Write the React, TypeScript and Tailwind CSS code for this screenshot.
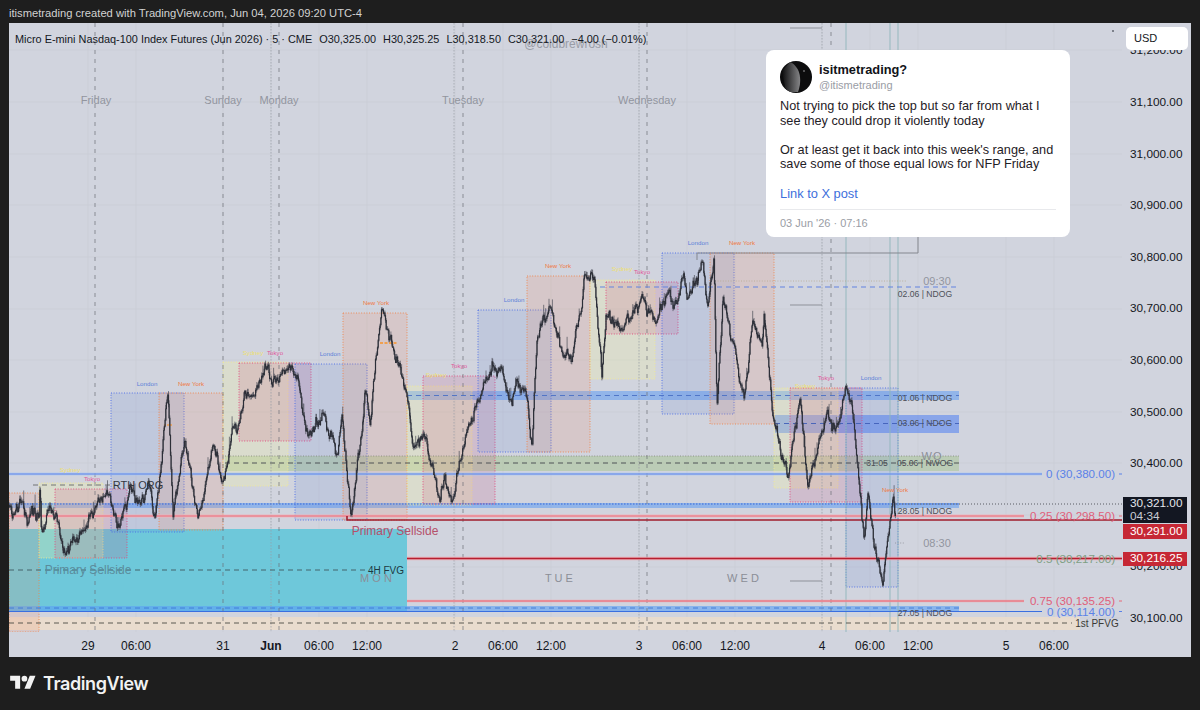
const waypoints: [number, number][] = [
  [9, 505], [14, 518], [20, 500], [28, 522], [34, 505], [39, 515], [40, 483], [41, 527], [50, 507], [58, 522], [65, 557],
  [75, 540], [85, 530], [95, 505], [105, 495], [110, 492], [117, 530], [130, 485], [140, 505], [150, 490], [155, 517],
  [168, 393], [173, 520], [185, 440], [198, 517], [213, 443], [223, 483], [233, 427], [238, 425], [245, 387], [250, 397],
  [267, 370], [272, 390], [287, 367], [297, 373], [308, 437], [323, 412], [337, 453], [342, 415], [351, 518], [363, 418],
  [365, 387], [370, 427], [382, 313], [393, 347], [407, 397], [413, 443], [423, 433], [440, 503], [445, 473], [451, 505],
  [467, 430], [480, 397], [488, 377], [502, 368], [510, 400], [517, 377], [527, 397], [532, 450], [537, 340], [550, 307],
  [563, 353], [572, 360], [582, 307], [584, 277], [595, 282], [602, 377], [606, 313], [620, 330], [642, 295], [657, 320],
  [667, 293], [678, 303], [682, 275], [687, 300], [703, 260], [708, 307], [714, 255], [717, 407], [723, 293], [737, 363],
  [744, 400], [753, 320], [762, 350], [764, 313], [773, 417], [788, 480], [800, 397], [808, 487], [827, 410], [835, 432],
  [847, 388], [855, 437], [860, 497], [864, 540], [868, 493], [877, 563], [883, 585], [888, 537], [893, 500], [895, 517],
];

// seeded so the candles come out the same every run
function buildCandles() {
  let seed = 74;
  const rnd = () => {
    seed = (seed * 16807) % 2147483647;
    return seed / 2147483647;
  };
  let wicks = "";
  let bodies = "";
  let walk = 0;
  let seg = 0;
  let prev = waypoints[0][1];
  for (let x = 9; x < 896; x += 0.67) {
    while (seg < waypoints.length - 2 && x > waypoints[seg + 1][0]) seg++;
    const [x0, y0] = waypoints[seg];
    const [x1, y1] = waypoints[seg + 1];
    const t = Math.min(1, (x - x0) / (x1 - x0));
    walk = walk * 0.9 + (rnd() - 0.5) * 5;
    const swing = Math.sin(x * 0.75) * 3 + Math.sin(x * 2.1 + 1) * 2.5;
    const damp = Math.min(1, 4 * t * (1 - t) + 0.3);
    const y = y0 + (y1 - y0) * t + (walk + swing + (rnd() - 0.5) * 4) * damp;
    const top = Math.min(prev, y);
    const bottom = Math.max(prev, y);
    const spike = rnd() < 0.06 ? 4 + rnd() * 6 : 0;
    wicks += `M${x.toFixed(1)} ${(top - 0.5 - rnd() * 3 - spike).toFixed(1)}V${(bottom + 0.5 + rnd() * 3).toFixed(1)}`;
    bodies += `M${x.toFixed(1)} ${top.toFixed(1)}V${(bottom + 0.6).toFixed(1)}`;
    prev = y;
  }
  return { wicks, bodies };
}

const candles = buildCandles();

type Session = { x: number; y: number; w: number; h: number; kind: "london" | "ny" | "sydney" | "tokyo" };

const sessionStyle = {
  london: { fill: "#5b7fd8", op: 0.14, stroke: "#4a6be8" },
  ny: { fill: "#f0916a", op: 0.18, stroke: "#f0854a" },
  sydney: { fill: "#f0f0a0", op: 0.28, stroke: "#f2ea90" },
  tokyo: { fill: "#c8507a", op: 0.17, stroke: "#e2487c" },
};

const sessions: Session[] = [
  { x: 9, y: 493, w: 30, h: 139, kind: "ny" },
  { x: 39, y: 483, w: 64, h: 75, kind: "sydney" },
  { x: 55, y: 489, w: 72, h: 69, kind: "tokyo" },
  { x: 111, y: 393, w: 73, h: 139, kind: "london" },
  { x: 159, y: 393, w: 64, h: 137, kind: "ny" },
  { x: 223, y: 362, w: 65, h: 124, kind: "sydney" },
  { x: 239, y: 363, w: 72, h: 78, kind: "tokyo" },
  { x: 295, y: 364, w: 72, h: 156, kind: "london" },
  { x: 343, y: 313, w: 64, h: 207, kind: "ny" },
  { x: 407, y: 386, w: 65, h: 119, kind: "sydney" },
  { x: 423, y: 376, w: 72, h: 128, kind: "tokyo" },
  { x: 478, y: 310, w: 73, h: 142, kind: "london" },
  { x: 527, y: 276, w: 63, h: 176, kind: "ny" },
  { x: 590, y: 280, w: 65, h: 99, kind: "sydney" },
  { x: 606, y: 282, w: 72, h: 52, kind: "tokyo" },
  { x: 662, y: 253, w: 72, h: 161, kind: "london" },
  { x: 710, y: 253, w: 64, h: 171, kind: "ny" },
  { x: 774, y: 388, w: 64, h: 100, kind: "sydney" },
  { x: 790, y: 388, w: 72, h: 114, kind: "tokyo" },
  { x: 846, y: 388, w: 52, h: 199, kind: "london" },
];

const sessionLabels: [string, number, number, string][] = [
  ["Sydney", 70, 472, "#efe070"], ["Tokyo", 92, 481, "#e0559a"], ["London", 147, 386, "#5b7fd8"], ["New York", 191, 386, "#f07840"],
  ["Sydney", 253, 355, "#efe070"], ["Tokyo", 275, 355, "#e0559a"], ["London", 330, 356, "#5b7fd8"], ["New York", 376, 305, "#f07840"],
  ["Sydney", 436, 377, "#efe070"], ["Tokyo", 459, 368, "#e0559a"], ["London", 514, 302, "#5b7fd8"], ["New York", 558, 268, "#f07840"],
  ["Sydney", 622, 271, "#efe070"], ["Tokyo", 642, 274, "#e0559a"], ["London", 698, 245, "#5b7fd8"], ["New York", 742, 245, "#f07840"],
  ["Sydney", 805, 388, "#efe070"], ["Tokyo", 826, 380, "#e0559a"], ["London", 871, 380, "#5b7fd8"], ["New York", 895, 492, "#f07840"],
];

const ndogLabels: [string, number, number][] = [
  ["02.06 | NDOG", 925, 297], ["01.06 | NDOG", 925, 401], ["03.06 | NDOG", 925, 426], ["05.06 | NWOG", 925, 466],
  ["28.05 | NDOG", 925, 514], ["27.05 | NDOG", 925, 616],
];

const fibLabels: [string, number, string][] = [
  ["0 (30,380.00)", 478, "#5b82e8"], ["0.25 (30,298.50)", 520, "#e0607a"], ["0.5 (30,217.00)", 563, "#7f9f84"],
  ["0.75 (30,135.25)", 605, "#e0607a"], ["0 (30,114.00)", 616, "#5b82e8"],
];

const gridX = [88, 136, 223, 271, 319, 367, 455, 503, 551, 639, 687, 735, 822, 870, 918, 1006, 1054];
// 30,300.00 sits behind the price badges, so its row stays empty
const prices = ["31,200.00", "31,100.00", "31,000.00", "30,900.00", "30,800.00", "30,700.00", "30,600.00", "30,500.00", "30,400.00", "", "30,200.00", "30,100.00"];
const gridY = [50, 102, 154, 205, 257, 309, 360, 412, 463, 515, 567, 618];
const dayLines = [95, 223, 279, 463, 647, 831];
const dotLines = [271, 454, 639, 822];
const dayNames: [string, number][] = [["Friday", 96], ["Sunday", 223], ["Monday", 279], ["Tuesday", 463], ["Wednesday", 647]];
const weekdays: [string, number][] = [["M O N", 376], ["T U E", 559], ["W E D", 743]];

function ChartDrawing() {
  return (
    <svg viewBox="9 23 1113 609" className="block h-full w-full">
      {gridY.map((y) => <line key={y} x1={9} x2={1122} y1={y} y2={y} stroke="#c8cbd5" strokeWidth={0.7} />)}
      {gridX.map((x) => <line key={x} x1={x} x2={x} y1={23} y2={632} stroke="#c8cbd5" strokeWidth={0.7} />)}

      {/* lines the cyan block covers */}
      <line x1={9} x2={407} y1={558.5} y2={558.5} stroke="#7a2030" strokeWidth={1.5} />
      <line x1={9} x2={407} y1={601} y2={601} stroke="#7a2030" strokeWidth={1} />

      <rect x={9} y={529} width={398} height={83} fill="#6ec8da" />
      <rect x={9} y={617} width={1071} height={13} fill="#f3dfc8" opacity={0.7} />

      <rect x={407} y={391} width={552} height={9} fill="#5f9bf2" opacity={0.55} />
      <rect x={775} y={415} width={184} height={18} fill="#4f7ef2" opacity={0.55} />
      <rect x={225} y={456} width={734} height={15} fill="#a5c48e" opacity={0.5} />
      <rect x={9} y={503} width={950} height={5} fill="#5f9bf2" opacity={0.55} />
      <rect x={9} y={606} width={950} height={6} fill="#5aa0f5" opacity={0.6} />

      {sessions.map((s) => {
        const st = sessionStyle[s.kind];
        return (
          <g key={`${s.kind}-${s.x}`}>
            <rect x={s.x} y={s.y} width={s.w} height={s.h} fill={st.fill} opacity={st.op} />
            <rect x={s.x} y={s.y} width={s.w} height={s.h} fill="none" stroke={st.stroke} strokeWidth={0.9} strokeDasharray="1 1.6" />
          </g>
        );
      })}

      {dotLines.map((x) => <line key={x} x1={x} x2={x} y1={23} y2={632} stroke="#9a9da6" strokeWidth={0.7} strokeDasharray="1.5 1.5" />)}
      {dayLines.map((x) => <line key={x} x1={x} x2={x} y1={23} y2={632} stroke="#6a6d75" strokeWidth={0.7} strokeDasharray="4 5" />)}
      {[846, 890, 898].map((x) => <line key={x} x1={x} x2={x} y1={23} y2={632} stroke="#8fb5ba" strokeWidth={0.9} />)}

      {/* levels */}
      <line x1={9} x2={1042} y1={474} y2={474} stroke="#a8c8f8" strokeWidth={3} opacity={0.6} />
      <line x1={9} x2={1042} y1={474} y2={474} stroke="#5b82e8" strokeWidth={1} />
      <line x1={9} x2={1024} y1={516} y2={516} stroke="#f5b5bd" strokeWidth={3} opacity={0.8} />
      <line x1={9} x2={1024} y1={516} y2={516} stroke="#e86a78" strokeWidth={1} />
      <path d="M347 516V520H1122" fill="none" stroke="#a01c2c" strokeWidth={1.6} />
      <line x1={407} x2={1122} y1={558.5} y2={558.5} stroke="#f2a6ae" strokeWidth={3.4} opacity={0.8} />
      <line x1={407} x2={1122} y1={558.5} y2={558.5} stroke="#b51f30" strokeWidth={1.3} />
      <line x1={407} x2={1024} y1={601} y2={601} stroke="#f2a6ae" strokeWidth={2.4} opacity={0.8} />
      <line x1={407} x2={1024} y1={601} y2={601} stroke="#e4606f" strokeWidth={0.9} />
      <line x1={9} x2={1042} y1={611.5} y2={611.5} stroke="#3a6fe0" strokeWidth={1} />
      {[[1119, 474, "#5b82e8"], [1119, 516, "#e86a78"], [1119, 601, "#e86a78"], [1119, 611.5, "#5b82e8"]].map(([x, y, c]) => (
        <line key={String(y)} x1={x as number} x2={1122} y1={y as number} y2={y as number} stroke={c as string} strokeWidth={1} />
      ))}

      {/* dashed / dotted levels */}
      <line x1={407} x2={959} y1={395.5} y2={395.5} stroke="#4a6fc4" strokeWidth={0.9} strokeDasharray="5 4" />
      <line x1={775} x2={959} y1={423.5} y2={423.5} stroke="#3f5fb8" strokeWidth={0.9} strokeDasharray="5 4" />
      <line x1={225} x2={959} y1={463} y2={463} stroke="#44474f" strokeWidth={0.9} strokeDasharray="5 4" />
      <line x1={225} x2={959} y1={456} y2={456} stroke="#777a70" strokeWidth={0.7} strokeDasharray="1 1.6" />
      <line x1={9} x2={959} y1={504} y2={504} stroke="#3568dc" strokeWidth={1.1} strokeDasharray="1.5 1.5" />
      <line x1={9} x2={959} y1={608} y2={608} stroke="#3f78d8" strokeWidth={0.9} strokeDasharray="5 4" />
      <line x1={9} x2={1072} y1={623} y2={623} stroke="#4b4a44" strokeWidth={0.9} strokeDasharray="5 4" />
      <line x1={9} x2={367} y1={570} y2={570} stroke="#3f5960" strokeWidth={0.9} strokeDasharray="5 4" />
      <line x1={33} x2={116} y1={485} y2={485} stroke="#666a66" strokeWidth={0.9} strokeDasharray="5 4" />
      <line x1={600} x2={958} y1={287} y2={287} stroke="#6383e0" strokeWidth={1} strokeDasharray="5 4" />
      <line x1={715} x2={907} y1={281} y2={281} stroke="#b8ab90" strokeWidth={0.8} strokeDasharray="1 1.6" />
      <line x1={896} x2={1122} y1={504} y2={504} stroke="#3b3e45" strokeWidth={0.8} strokeDasharray="1 2" />
      <line x1={895} x2={905} y1={543} y2={543} stroke="#8e9199" strokeWidth={0.8} strokeDasharray="1 1.6" />

      {/* range box and short markers */}
      <path d="M697 260V253H918V200" fill="none" stroke="#84878f" strokeWidth={1} />
      {[28, 305, 581].map((y) => <line key={y} x1={790} x2={822} y1={y} y2={y} stroke="#8e9199" strokeWidth={1} />)}
      <line x1={164} x2={172} y1={425} y2={425} stroke="#f0a050" strokeWidth={1.4} strokeDasharray="2 1" />
      <line x1={380} x2={397} y1={343} y2={343} stroke="#f0a050" strokeWidth={2} strokeDasharray="3 1.5" />

      <path d={candles.wicks} fill="none" stroke="#4a4d57" strokeWidth={0.7} />
      <path d={candles.bodies} fill="none" stroke="#2c2f38" strokeWidth={1.2} />

      {sessionLabels.map(([t, x, y, c]) => (
        <text key={`${t}-${x}`} x={x} y={y} fontSize={6.2} fill={c} textAnchor="middle">{t}</text>
      ))}
      {dayNames.map(([t, x]) => (
        <text key={t} x={x} y={104} fontSize={11} fill="#92959e" textAnchor="middle">{t}</text>
      ))}
      {weekdays.map(([t, x]) => (
        <text key={t} x={x} y={582} fontSize={11} fill="#8b8e97" textAnchor="middle">{t}</text>
      ))}
      <text x={566} y={48} fontSize={12} fill="#9a9da6" textAnchor="middle">@coldbrewrosh</text>
      <text x={138} y={489} fontSize={11} fill="#34373f" textAnchor="middle">RTH ORG</text>
      <text x={395} y={535} fontSize={12} fill="#b5506a" textAnchor="middle">Primary Sellside</text>
      <text x={88} y={574} fontSize={12} fill="#5a8c9c" textAnchor="middle">Primary Sellside</text>
      <text x={386} y={574} fontSize={10} fill="#1d3a42" textAnchor="middle">4H FVG</text>
      <text x={1097} y={627} fontSize={10} fill="#3a3a36" textAnchor="middle">1st PFVG</text>
      <text x={937} y={285} fontSize={11} fill="#92959e" textAnchor="middle">09:30</text>
      <text x={937} y={547} fontSize={11} fill="#92959e" textAnchor="middle">08:30</text>
      <text x={932} y={460} fontSize={11} fill="#8b8e97" textAnchor="middle" letterSpacing={1}>WO</text>
      <text x={877} y={466} fontSize={8.6} fill="#4d5058" textAnchor="middle">31.05</text>
      {ndogLabels.map(([t, x, y]) => (
        <text key={t} x={x} y={y} fontSize={8.6} fill="#4d5058" textAnchor="middle">{t}</text>
      ))}
      {fibLabels.map(([t, y, c]) => (
        <text key={t} x={1115} y={y} fontSize={11.6} fill={c} textAnchor="end">{t}</text>
      ))}
      <circle cx={1113} cy={31} r={0.8} fill="#131722" />
    </svg>
  );
}

function Avatar() {
  return (
    <svg viewBox="0 0 32 32" className="h-8 w-8 shrink-0">
      <defs>
        <clipPath id="avatar-clip"><circle cx={16} cy={16} r={16} /></clipPath>
        <linearGradient id="moon" x1="0" y1="0" x2="1" y2="0">
          <stop offset="0" stopColor="#0c0c0d" />
          <stop offset="1" stopColor="#858587" />
        </linearGradient>
      </defs>
      <g clipPath="url(#avatar-clip)">
        <rect width={32} height={32} fill="#0c0c0d" />
        <path d="M10 1C19 5 23 17 18 31L6 31L2 10Z" fill="url(#moon)" />
        <circle cx={24} cy={10} r={0.8} fill="#a8a8aa" />
      </g>
    </svg>
  );
}

const timeTicks = [
  { t: "29", c: "" }, { t: "06:00", c: "" },
  { t: "31", c: "ml-[39px]" }, { t: "Jun", c: "font-bold" }, { t: "06:00", c: "" }, { t: "12:00", c: "" },
  { t: "2", c: "ml-[40px]" }, { t: "06:00", c: "" }, { t: "12:00", c: "" },
  { t: "3", c: "ml-[40px]" }, { t: "06:00", c: "" }, { t: "12:00", c: "" },
  { t: "4", c: "ml-[39px]" }, { t: "06:00", c: "" }, { t: "12:00", c: "" },
  { t: "5", c: "ml-[40px]" }, { t: "06:00", c: "" },
];

export default function App() {
  return (
    <div className="flex h-[710px] w-[1200px] flex-col overflow-hidden bg-[#1e1e1e] font-['Liberation_Sans',Arial,sans-serif]">
      {/* Snapshot title */}
      <div className="flex h-[23px] shrink-0 items-center pl-[9px] pt-[4px] text-[11.2px] text-[#d2d2d2]">
        itismetrading created with TradingView.com, Jun 04, 2026 09:20 UTC-4
      </div>

      {/* Chart */}
      <div className="mx-[9px] flex h-[634px] shrink-0 flex-col bg-[#d1d4de]">
        <div className="flex h-[609px]">
          <div className="relative w-[1113px]">
            <ChartDrawing />
            <div className="absolute left-[6px] top-[8px] flex gap-[7px] whitespace-nowrap text-[10.9px] text-[#131722]">
              <span>Micro E-mini Nasdaq-100 Index Futures (Jun 2026) · 5 · CME</span>
              <span>O30,325.00</span>
              <span>H30,325.25</span>
              <span>L30,318.50</span>
              <span>C30,321.00</span>
              <span>−4.00 (−0.01%)</span>
            </div>

            {/* Post card */}
            <div className="absolute left-[757px] top-[27px] flex h-[187px] w-[304px] flex-col rounded-lg bg-white px-[14px] pt-[11px] text-[#1f2126]">
              <div className="flex items-center gap-[7px]">
                <Avatar />
                <div className="flex flex-col">
                  <span className="text-[12.8px] font-bold leading-[16px] text-[#111318]">isitmetrading?</span>
                  <span className="text-[11px] leading-[14px] text-[#9a9da5]">@itismetrading</span>
                </div>
              </div>
              <p className="mt-[6px] whitespace-nowrap text-[12.7px] leading-[14.6px]">
                Not trying to pick the top but so far from what I
                <br />
                see they could drop it violently today
                <br />
                <br />
                Or at least get it back into this week's range, and
                <br />
                save some of those equal lows for NFP Friday
              </p>
              <span className="mt-[14px] text-[12.85px] leading-[15px] text-[#3d6fdc]">Link to X post</span>
              <div className="mt-[8px] border-t border-[#e8e9ec] pt-[7px] text-[11px] leading-[13px] text-[#9a9da5]">
                03 Jun '26 · 07:16
              </div>
            </div>
          </div>

          {/* Price axis */}
          <div className="relative w-[69px] pl-[8px] pt-[2.4px] text-[11.8px] text-[#131722]">
            {prices.map((p, i) => (
              <div key={i} className="flex h-[51.6px] items-center">{p}</div>
            ))}
            <div className="absolute left-[4px] top-[4px] flex h-[23px] w-[62px] items-center rounded-[5px] bg-white pl-[8px] text-[11px]">
              USD
            </div>
            <div className="absolute left-[1px] top-[474px] flex h-[26px] w-[64px] flex-col bg-[#131722] pl-[7px] leading-[13px] text-[#e2e4ea]">
              <span>30,321.00</span>
              <span className="text-[#c9ccd4]">04:34</span>
            </div>
            <div className="absolute left-[1px] top-[501px] flex h-[15px] w-[64px] items-center bg-[#c62835] pl-[7px] text-white">30,291.00</div>
            <div className="absolute left-[1px] top-[529px] flex h-[14px] w-[64px] items-center bg-[#c62835] pl-[7px] text-white">30,216.25</div>
          </div>
        </div>

        {/* Time axis */}
        <div className="flex h-[25px] items-center pl-[55px] pt-[2px] text-[12px] text-[#131722]">
          {timeTicks.map((tick, i) => (
            <span key={i} className={`w-[48px] text-center ${tick.c}`}>{tick.t}</span>
          ))}
        </div>
      </div>

      {/* Footer logo */}
      <div className="flex flex-1 items-center gap-[7px] pb-[1px] pl-[10px]">
        <svg viewBox="0 0 36 28" className="h-[20px] w-[26px]" fill="#f2f2f2">
          <path d="M14 22H7V11H0V4h14v18zM28 22h-8l7.5-18h8L28 22z" />
          <circle cx={20} cy={8} r={4} />
        </svg>
        <span className="font-['Inter',sans-serif] text-[18px] font-semibold tracking-[-0.4px] text-[#f2f2f2]">TradingView</span>
      </div>
    </div>
  );
}
